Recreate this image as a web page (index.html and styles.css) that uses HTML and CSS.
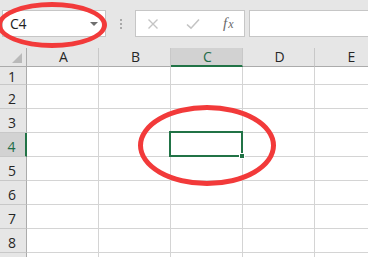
FILE: index.html
```html
<!DOCTYPE html>
<html>
<head>
<meta charset="utf-8">
<link rel="stylesheet" href="styles.css">
</head>
<body>
<div class="app">
  <div class="toolbar">
    <div class="namebox">
      <span class="ref">C4</span>
      <span class="caret"></span>
    </div>
    <div class="grip"><i></i><i></i><i></i></div>
    <div class="fbuttons">
      <svg class="ico" width="12" height="12" viewBox="0 0 12 12"><path d="M1.5 1.5 L10.5 10.5 M10.5 1.5 L1.5 10.5" stroke="#c4c4c4" stroke-width="1.4" fill="none"/></svg>
      <svg class="ico" width="14" height="12" viewBox="0 0 14 12"><path d="M1 6.5 L5 10.2 L13 1.5" stroke="#c4c4c4" stroke-width="1.6" fill="none"/></svg>
      <span class="fx"><i>f</i><i class="x">x</i></span>
    </div>
    <div class="formula"></div>
  </div>
  <div class="sheet">
    <div class="corner"><span class="tri"></span></div>
    <div class="ch">A</div>
    <div class="ch">B</div>
    <div class="ch sel">C</div>
    <div class="ch">D</div>
    <div class="ch">E</div>

    <div class="rh first">1</div>
    <div class="c first"></div><div class="c first"></div><div class="c first"></div><div class="c first"></div><div class="c first"></div>

    <div class="rh">2</div>
    <div class="c"></div><div class="c"></div><div class="c"></div><div class="c"></div><div class="c"></div>

    <div class="rh">3</div>
    <div class="c"></div><div class="c"></div><div class="c"></div><div class="c"></div><div class="c"></div>

    <div class="rh sel">4</div>
    <div class="c"></div><div class="c"></div><div class="c active"><span class="handle"></span></div><div class="c"></div><div class="c"></div>

    <div class="rh">5</div>
    <div class="c"></div><div class="c"></div><div class="c"></div><div class="c"></div><div class="c"></div>

    <div class="rh">6</div>
    <div class="c"></div><div class="c"></div><div class="c"></div><div class="c"></div><div class="c"></div>

    <div class="rh">7</div>
    <div class="c"></div><div class="c"></div><div class="c"></div><div class="c"></div><div class="c"></div>

    <div class="rh">8</div>
    <div class="c"></div><div class="c"></div><div class="c"></div><div class="c"></div><div class="c"></div>

    <div class="rh"></div>
    <div class="c"></div><div class="c"></div><div class="c"></div><div class="c"></div><div class="c"></div>
  </div>
  <div class="mark mark-name"></div>
  <div class="mark mark-cell"></div>
</div>
</body>
</html>
```

FILE: styles.css
```css
* { box-sizing: border-box; }
html, body { margin: 0; padding: 0; }
body {
  width: 368px;
  height: 257px;
  overflow: hidden;
  background: #ffffff;
  font-family: "Open Sans", "Liberation Sans", sans-serif;
}
.app {
  position: relative;
  width: 368px;
  height: 257px;
  overflow: hidden;
  background: #e6e6e6;
}
.toolbar {
  height: 48px;
  padding-top: 10px;
  display: flex;
  align-items: flex-start;
}
.namebox {
  margin-left: 2px;
  width: 104px;
  height: 27px;
  background: #fff;
  border: 1px solid #c6c6c6;
  display: flex;
  align-items: center;
  justify-content: space-between;
  padding: 0 7px 0 7px;
}
.ref {
  font-size: 14px;
  color: #222;
  letter-spacing: -0.3px;
}
.caret {
  width: 0;
  height: 0;
  border-left: 4px solid transparent;
  border-right: 4px solid transparent;
  border-top: 4px solid #6f6f6f;
}
.grip {
  width: 29px;
  height: 27px;
  display: flex;
  flex-direction: column;
  align-items: center;
  justify-content: center;
  gap: 2px;
}
.grip i {
  display: block;
  width: 2px;
  height: 2px;
  background: #a9a9a9;
}
.fbuttons {
  width: 110px;
  height: 27px;
  background: #fff;
  border: 1px solid #c6c6c6;
  display: flex;
  align-items: center;
  padding-left: 11px;
}
.fbuttons .ico:nth-child(1) { margin-right: 27px; }
.fbuttons .ico:nth-child(2) { margin-right: 23px; }
.fx {
  font-family: "Liberation Serif", serif;
  font-style: italic;
  font-size: 15px;
  color: #6a6a6a;
  line-height: 1;
}
.fx i { font-style: italic; }
.fx .x { font-size: 12px; margin-left: 1px; }
.formula {
  margin-left: 4px;
  flex: 1;
  height: 27px;
  background: #fff;
  border: 1px solid #c6c6c6;
  border-right: none;
}
.sheet {
  display: grid;
  grid-template-columns: 27px repeat(5, 72px);
  grid-template-rows: 19px 18px repeat(8, 24px);
  background: #fff;
}
.corner {
  background: #e6e6e6;
  border-right: 1px solid #ababab;
  border-bottom: 1px solid #ababab;
  position: relative;
}
.tri {
  position: absolute;
  right: 4px;
  bottom: 3px;
  width: 0;
  height: 0;
  border-left: 10px solid transparent;
  border-bottom: 10px solid #b9b9b9;
}
.ch {
  background: #e6e6e6;
  border-right: 1px solid #c8c8c8;
  border-bottom: 1px solid #ababab;
  font-size: 14px;
  color: #262626;
  text-align: center;
  line-height: 18px;
  padding-left: 2px;
}
.ch.sel {
  background: #d2d2d2;
  color: #1e6b47;
  border-bottom: 2px solid #217346;
  line-height: 17px;
}
.rh {
  background: #e6e6e6;
  border-right: 1px solid #ababab;
  border-bottom: 1px solid #c8c8c8;
  font-size: 14px;
  color: #262626;
  text-align: center;
  line-height: 28px;
  padding-right: 2px;
}
.rh.first { line-height: 20px; }
.rh.sel {
  background: #d2d2d2;
  color: #1e6b47;
  border-right: 2px solid #217346;
}
.c {
  border-right: 1px solid #d4d4d4;
  border-bottom: 1px solid #d4d4d4;
}
.c.active {
  position: relative;
}
.c.active::before {
  content: "";
  position: absolute;
  left: -2px;
  top: -2px;
  right: -1px;
  bottom: -1px;
  border: 2px solid #217346;
}
.handle {
  position: absolute;
  right: -3px;
  bottom: -3px;
  width: 6px;
  height: 6px;
  background: #217346;
  border: 1px solid #fff;
  z-index: 2;
}
.mark {
  position: absolute;
  border: 5px solid #f23a3a;
  border-radius: 50%;
  pointer-events: none;
}
.mark-name {
  left: -3px;
  top: 2px;
  width: 110px;
  height: 46px;
}
.mark-cell {
  left: 138px;
  top: 105px;
  width: 138px;
  height: 81px;
}
```
